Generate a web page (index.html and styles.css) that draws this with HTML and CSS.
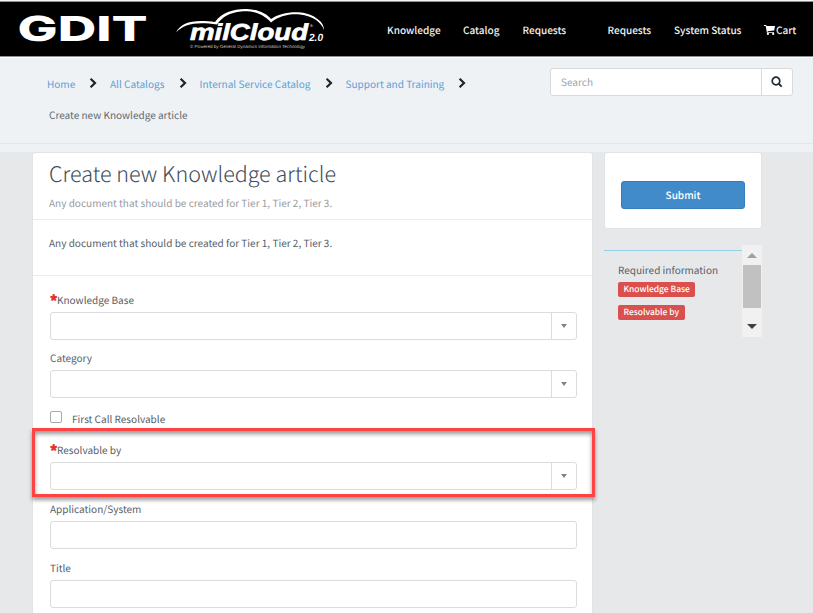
FILE: index.html
```html
<!DOCTYPE html>
<html lang="en">
<head>
<meta charset="utf-8">
<title>Create new Knowledge article</title>
<link rel="stylesheet" href="styles.css">
</head>
<body>
<header class="topbar">
  <svg class="logos" width="340" height="54" viewBox="0 2 340 54" fill="#fff">
    <text class="logo-gdit" x="17.500" y="41" textLength="130" lengthAdjust="spacingAndGlyphs">GDIT</text>
    <path d="M176 32.500C181 22 194 19 215 22C222 12 235 8.500 247 9C257 9.500 266 13 271 19C283 10.500 306 10 316 18C321 21 324 25 324 30C321 22 313 16 300 14.500C289 13.500 279 16 271 22.500C261 11.500 250 11 241 11.500C230 12.500 222 17 217 24.500C196 21.500 184 24 176 32.500Z"/>
    <text class="logo-mil" x="190" y="40" textLength="118" lengthAdjust="spacingAndGlyphs">milCloud</text>
    <text class="logo-reg" x="310" y="27">®</text>
    <text class="logo-ver" x="309" y="40.500" textLength="14" lengthAdjust="spacingAndGlyphs">2.0</text>
    <text class="logo-tag" x="190" y="48" textLength="115" lengthAdjust="spacingAndGlyphs">© Powered by General Dynamics Information Technology</text>
  </svg>
  <nav class="nav">
    <a>Knowledge</a><a>Catalog</a><a>Requests</a><a>Requests</a><a>System Status</a>
    <a class="cart"><svg width="11" height="10" viewBox="0 0 11 10" fill="#fff"><path d="M0 0h2.200l.4 1.100H11L10.200 5.500 3.600 6.300l.1.700H10v.8H2.900L1.700.900H0Z"/><circle cx="3.900" cy="8.900" r="1.100"/><circle cx="9.200" cy="8.900" r="1.100"/></svg>Cart</a>
  </nav>
</header>
<section class="subhead">
  <div class="crumbs">
    <a>Home</a><svg class="chev" viewBox="0 0 8 12"><path d="M1.600 1.700 6 6 1.600 10.300"/></svg>
    <a>All Catalogs</a><svg class="chev" viewBox="0 0 8 12"><path d="M1.600 1.700 6 6 1.600 10.300"/></svg>
    <a>Internal Service Catalog</a><svg class="chev" viewBox="0 0 8 12"><path d="M1.600 1.700 6 6 1.600 10.300"/></svg>
    <a>Support and Training</a><svg class="chev" viewBox="0 0 8 12"><path d="M1.600 1.700 6 6 1.600 10.300"/></svg>
    <span class="current">Create new Knowledge article</span>
  </div>
  <div class="search">
    <span class="search-text">Search</span>
    <span class="search-btn"><svg width="12" height="12" viewBox="0 0 12 12" fill="none" stroke="#222b33"><circle cx="5" cy="5" r="3.800" stroke-width="1.700"/><path d="M7.800 7.800 10.600 10.600" stroke-width="2"/></svg></span>
  </div>
</section>
<div class="strip"></div>
<main class="main">
  <section class="card form">
    <div class="head">
      <h1>Create new Knowledge article</h1>
      <p>Any document that should be created for Tier 1, Tier 2, Tier 3.</p>
    </div>
    <div class="desc">Any document that should be created for Tier 1, Tier 2, Tier 3.</div>
    <div class="fields">
      <div class="field"><label class="req">Knowledge Base</label><div class="input"><span class="arrow"></span></div></div>
      <div class="field"><label>Category</label><div class="input"><span class="arrow"></span></div></div>
      <div class="check"><span class="box"></span><span>First Call Resolvable</span></div>
      <div class="field"><label class="req">Resolvable by</label><div class="input"><span class="arrow"></span></div><div class="highlight"></div></div>
      <div class="field"><label>Application/System</label><div class="input"></div></div>
      <div class="field"><label>Title</label><div class="input"></div></div>
    </div>
  </section>
  <aside class="side">
    <div class="card submit"><div class="button">Submit</div></div>
    <div class="required">
      <div class="info">
        <div class="info-title">Required information</div>
        <span class="badge">Knowledge Base</span>
        <span class="badge">Resolvable by</span>
      </div>
      <div class="scroll"><i class="up"></i><i class="thumb"></i><i class="down"></i></div>
    </div>
  </aside>
</main>
</body>
</html>
```
FILE: styles.css
```css
* { box-sizing: border-box; }
body {
  margin: 0;
  width: 813px;
  height: 613px;
  overflow: hidden;
  background: #e6e8ea;
  color: #56606a;
  font-family: "Noto Sans CJK SC", "Open Sans", sans-serif;
  font-size: 10.030px;
  line-height: 16px;
  white-space: nowrap;
  text-rendering: geometricPrecision;
}
svg { display: block; flex: none; }

.topbar {
  display: flex;
  height: 57px;
  padding-top: 1px;
  background: #000;
  border-top: 1px solid #f4f5f6;
  border-bottom: 1px solid #8e9194;
  box-shadow: inset 0 1px #8e9194;
}
.logo-gdit { font: 800 34.500px Inter, sans-serif; }
.logo-mil { font: italic bold 23px "Liberation Sans", sans-serif; stroke: #fff; stroke-width: .7px; }
.logo-reg { font: 4px "Liberation Sans", sans-serif; }
.logo-ver { font: italic bold 10.500px "Liberation Sans", sans-serif; }
.logo-tag { font: 4.500px "Liberation Sans", sans-serif; fill: #ccc; }
.nav {
  display: grid;
  grid-template-columns: 76px 59.500px 85px 66.500px 90px 49px;
  align-items: center;
  height: 55px;
  margin-left: 47px;
  color: #f2f2f2;
  font-weight: 500;
}
.cart { display: flex; align-items: center; gap: 1px; }

.subhead {
  display: flex;
  justify-content: space-between;
  height: 87px;
  padding: 10px 20px 0 47px;
  background: #eef2f4;
  border-top: 1px solid #fafbfc;
  border-bottom: 1px solid #e4e7ea;
}
.crumbs {
  display: grid;
  grid-template-columns: 42px 21px 69px 20.500px 125px 21px 112px 10px;
  grid-template-rows: 31px 32px;
  align-items: center;
  color: #5b9fd8;
}
.chev { width: 8px; height: 12px; margin-top: -1px; fill: none; stroke: #1d242b; stroke-width: 2.200; }
.current { grid-column: 1 / -1; padding-left: 2px; color: #616a72; }
.search {
  display: flex;
  width: 243px;
  height: 28px;
  background: #fff;
  border: 1px solid #d8dbde;
  border-radius: 3px;
}
.search-text { flex: 1; padding: 5px 10px; color: #a0a4a8; }
.search-btn {
  display: grid;
  place-items: center;
  width: 31px;
  border-left: 1px solid #d8dbde;
}
.strip { height: 8px; background: #eef2f5; }

.main { display: flex; gap: 11px; padding-left: 32px; }
.card {
  background: #fff;
  border: 1px solid #e1e4e6;
  border-radius: 3px;
}
.form { width: 561px; height: 480px; }
.head { height: 67px; padding: 4px 16px 0; border-bottom: 1px solid #e9ebec; }
h1 {
  margin: 0;
  font-size: 21.500px;
  line-height: 34px;
  font-weight: 300;
  color: #414b57;
}
.head p { margin: 4px 0 0; color: #989c9f; }
.desc { height: 56px; padding: 15px 16px 0; border-bottom: 1px solid #e9ebec; }
.fields { padding: 15.500px 15px 0 17px; }
.field { position: relative; height: 58.800px; }
.field label { display: block; height: 20px; }
.req::before {
  content: "*";
  display: inline-block;
  width: 7px;
  color: #e0332d;
  font-size: 14px;
  font-weight: 900;
  line-height: 10px;
  vertical-align: -2px;
  -webkit-text-stroke: .6px #e0332d;
}
.input {
  display: flex;
  justify-content: flex-end;
  height: 28px;
  border: 1px solid #dadcde;
  border-radius: 3px;
}
.arrow {
  display: grid;
  place-items: center;
  width: 25px;
  border-left: 1px solid #dadcde;
}
.arrow::before {
  content: "";
  border: 3px solid transparent;
  border-top: 4.500px solid #808488;
  border-bottom: 0;
}
.check { display: flex; gap: 10px; height: 33.300px; padding-top: 1.500px; }
.box { width: 12px; height: 12px; border: 1px solid #a6a9ac; border-radius: 2px; }
.highlight {
  position: absolute;
  left: -18px;
  top: -14.500px;
  width: 563px;
  height: 69px;
  border: 3px solid #fd4343;
  box-shadow: 0 3px 4px rgba(0,0,0,.4), inset 0 3px 4px rgba(0,0,0,.4);
}

.side { width: 158px; }
.submit { height: 77px; padding: 28px 16px 0; }
.button {
  height: 28px;
  background: #428bca;
  border: 1px solid #357ebd;
  border-radius: 3px;
  color: #fff;
  font-weight: 500;
  line-height: 25px;
  text-align: center;
}
.required { display: flex; margin-top: 16px; }
.info {
  display: flex;
  flex-direction: column;
  align-items: flex-start;
  width: 138px;
  height: 87px;
  margin-top: 5px;
  padding: 11px 14px 0;
  border-top: 1px solid #94cfe6;
}
.info-title { height: 20px; }
.badge {
  height: 15px;
  margin-bottom: 8px;
  padding: 0 5.500px;
  border-radius: 2px;
  background: #d9504e;
  color: #fff;
  font-size: 8.450px;
  font-weight: 500;
  line-height: 14px;
}
.scroll {
  display: flex;
  flex-direction: column;
  align-items: center;
  width: 20px;
  height: 92px;
  background: #f1f1f1;
}
.up { margin: 8px 0 7px; border: 5px solid transparent; border-bottom-color: #a0a0a0; border-top: 0; }
.thumb { width: 18px; height: 43px; background: #c1c1c1; }
.down { margin-top: 16px; border: 5px solid transparent; border-top-color: #404040; border-bottom: 0; }
```
